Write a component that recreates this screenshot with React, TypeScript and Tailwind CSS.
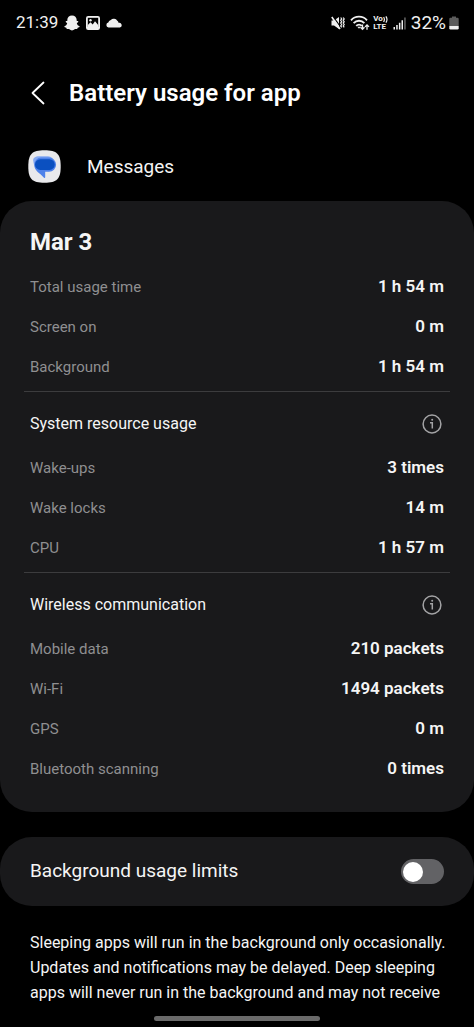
import { useId, useState } from "react";

type Usage = { label: string; value: string };

const dailyUsage: Usage[] = [
  { label: "Total usage time", value: "1 h 54 m" },
  { label: "Screen on", value: "0 m" },
  { label: "Background", value: "1 h 54 m" },
];

const systemUsage: Usage[] = [
  { label: "Wake-ups", value: "3 times" },
  { label: "Wake locks", value: "14 m" },
  { label: "CPU", value: "1 h 57 m" },
];

const wirelessUsage: Usage[] = [
  { label: "Mobile data", value: "210 packets" },
  { label: "Wi-Fi", value: "1494 packets" },
  { label: "GPS", value: "0 m" },
  { label: "Bluetooth scanning", value: "0 times" },
];

function UsageList({ rows }: { rows: Usage[] }) {
  return (
    <dl className="px-[6px]">
      {rows.map((row) => (
        <div key={row.label} className="flex h-10 items-center justify-between">
          <dt className="text-[15px] text-[#8f8f91]">{row.label}</dt>
          <dd className="text-[17px] font-semibold text-[#f5f5f5]">{row.value}</dd>
        </div>
      ))}
    </dl>
  );
}

function InfoIcon() {
  return (
    <svg viewBox="0 0 20 20" className="size-5" fill="none" stroke="#a3a3a5" aria-hidden="true">
      <circle cx="10" cy="10" r="8.9" strokeWidth="1.5" />
      <path d="M8 8.7h2.300v5.800" strokeWidth="1.5" />
      <circle cx="10.2" cy="5.8" r="1" fill="#a3a3a5" stroke="none" />
    </svg>
  );
}

function UsageSection({ title, rows }: { title: string; rows: Usage[] }) {
  return (
    <section className="border-t border-[#3c3c3e] pt-2 pb-1 last:pb-0">
      <div className="flex h-12 items-center justify-between pr-2 pl-[6px]">
        <h3 className="text-[16px] text-[#f5f5f5]">{title}</h3>
        <button type="button" aria-label={`About ${title}`}>
          <InfoIcon />
        </button>
      </div>
      <UsageList rows={rows} />
    </section>
  );
}

function StatusBar() {
  return (
    <div className="flex h-[46px] items-center justify-between pr-[15px] pl-4 text-[#f0f0f0]">
      <div className="flex items-center">
        <span className="text-[17px]">21:39</span>
        <svg viewBox="0 0 16 16" className="ml-[6px] size-4" fill="currentColor" aria-hidden="true">
          <path d="M8 .5c2.8 0 4.7 1.900 4.700 4.400v1.200c.6.100 1.400-.3 1.600.4.200.8-1 1.100-1.500 1.700.4 1.600 1.300 2.500 2.800 3 .3 1-1.200 1.300-1.900 1.500-.3.400-.1 1.100-.7 1.200-.8.100-1.600-.2-2.400.3-.8.700-1.600 1.200-2.600 1.200s-1.800-.5-2.600-1.200c-.8-.5-1.600-.2-2.400-.3-.6-.1-.4-.8-.7-1.200-.7-.2-2.200-.5-1.900-1.500 1.500-.5 2.400-1.400 2.800-3-.5-.6-1.700-.9-1.500-1.700.2-.7 1-.3 1.600-.4V4.900C3.300 2.400 5.200.5 8 .5Z" />
        </svg>
        <svg viewBox="0 0 14 14" className="ml-[6px] size-[14px]" aria-hidden="true">
          <rect width="14" height="14" rx="2.2" fill="currentColor" />
          <rect x="1.8" y="1.8" width="10.4" height="9" fill="#000" />
          <path d="M1.800 11V9l2.700-2.700 2.200 2.200 2.300-3.200 3.200 3.700v2Z" fill="currentColor" />
          <circle cx="4.5" cy="4.200" r="1.2" fill="currentColor" />
        </svg>
        <svg viewBox="0 0 16 10" className="ml-[6px] h-[10px] w-4" fill="currentColor" aria-hidden="true">
          <path d="M2.500 9.500A2.500 2.500 0 0 1 2.300 4.600 3.300 3.300 0 0 1 4.800 2 4.200 4.200 0 0 1 11.300 2.800a3 3 0 0 1 1.200 2 2.400 2.400 0 0 1 1.400 4.700Z" />
        </svg>
      </div>
      <div className="flex items-center">
        <svg viewBox="0 0 14 14" className="size-[14px]" fill="currentColor" stroke="currentColor" aria-hidden="true">
          <path d="M.5 4.500h2.500L8 1v12L3 9.500H.5Z" stroke="none" />
          <path d="M2 .4 10 11.500" stroke="#000" strokeWidth="1.2" />
          <path d="M.8 1 9 13" strokeWidth="1.6" />
          <path d="m9.700 1.500 1 1.400-1 1.400 1 1.400-1 1.400 1 1.400-1 1.400 1 1.400M12.200 1.500l1 1.400-1 1.400 1 1.400-1 1.400 1 1.400-1 1.400 1 1.400" fill="none" strokeWidth="1.2" />
        </svg>
        <svg viewBox="0 0 20 16" className="ml-[5px] h-4 w-5" fill="none" stroke="currentColor" aria-hidden="true">
          <path d="M1 5.300C5.200.5 12.800.5 17 5.300M3.600 8.200c3-3.300 7.800-3.300 10.800 0M6.200 10.800c1.700-1.700 4-1.700 5.600 0" strokeWidth="1.8" />
          <path d="m7.300 11.700 1.700 2.100 1.700-2.100Z" fill="currentColor" stroke="none" />
          <path d="M12.500 9.500v4.700m-2-1.900 2 2 2-2M17 14.800V10m-2 1.900 2-2 2 2" strokeWidth="1.3" />
        </svg>
        <div className="ml-[3px] flex flex-col text-[8px] leading-[8px] font-bold">
          <span className="flex items-center">
            Vo
            <svg viewBox="0 0 5 7" className="h-[7px] w-[5px]" fill="none" stroke="currentColor" strokeWidth="1.2" aria-hidden="true">
              <path d="M.6 1q1.600 2.500 0 5M2.900.3q2.200 3.200 0 6.400" />
            </svg>
          </span>
          <span>LTE</span>
        </div>
        <svg viewBox="0 0 13 13" className="ml-[5px] size-[13px]" fill="currentColor" aria-hidden="true">
          <path d="M.5 10h1.500v2.500H.5ZM3.200 8h1.500v4.500H3.200ZM5.900 5.700h1.500v6.800H5.900ZM8.500 3.300H10v9.200H8.500Z" />
          <path d="M11.200.5h1.500v12h-1.500Z" fill="#666" />
        </svg>
        <span className="ml-[5px] text-[19px]">32%</span>
        <svg viewBox="0 0 10 14" className="ml-[3px] h-[14px] w-[10px]" aria-hidden="true">
          <path d="M3 .5h4v1.300h1.500q1.200 0 1.200 1.200v7H.3V3q0-1.200 1.200-1.200H3Z" fill="#5c5c5c" />
          <path d="M.3 10h9.400v2.300q0 1.200-1.200 1.200h-7q-1.200 0-1.200-1.200Z" fill="currentColor" />
        </svg>
      </div>
    </div>
  );
}

function MessagesIcon() {
  return (
    <svg viewBox="0 0 33 33" className="size-[33px]" aria-hidden="true">
      <path d="M16.500.3C29 .3 32.700 4 32.700 16.500S29 32.700 16.500 32.700.3 29 .3 16.500 4 .3 16.500.3Z" fill="#e9e9ec" />
      <path d="M11 6.300h9a6 6 0 0 1 6 6v1a6 6 0 0 1-6 6h-8a6.500 6.500 0 0 1-6-4.500l-.8-4C4.800 8 7.500 6.300 11 6.300Z" fill="#85a9f2" />
      <path d="M13 7.600h8a7.100 7.100 0 0 1 0 14.200h-3.800v5.500c0 .7-.7.900-1.200.4l-3.500-3.400C9 21.500 6.300 19 6.300 14.700A7 7 0 0 1 13 7.600Z" fill="#4f82ea" />
      <path d="M12.300 9.300h9.200a5.200 5.200 0 0 1 0 10.600h-9.200a5.200 5.200 0 0 1 0-10.600Z" fill="#0b50c0" />
    </svg>
  );
}

export default function App() {
  const [limited, setLimited] = useState(false);
  const switchId = useId();

  return (
    <div className="min-h-screen bg-black font-['Roboto',sans-serif] text-[#f5f5f5]">
      <StatusBar />
      <header className="flex h-[94px] items-center pl-[30px]">
        <button type="button" aria-label="Back" className="flex size-4 items-center justify-center">
          <svg viewBox="0 0 14 24" className="h-6 w-[14px] shrink-0" fill="none" stroke="#fff" strokeWidth="1.8" strokeLinecap="round" strokeLinejoin="round" aria-hidden="true">
            <path d="M12.500 1.500 1.500 12l11 10.500" />
          </svg>
        </button>
        <h1 className="ml-[23px] text-[24px] font-semibold text-white">Battery usage for app</h1>
      </header>
      <main>
        <div className="flex h-[61px] items-start gap-[26px] pt-[10px] pl-7">
          <MessagesIcon />
          <p className="text-[19px] leading-[33px]">Messages</p>
        </div>
        <article className="rounded-[32px] bg-[#19191b] px-6 pt-6 pb-[23px]">
          <h2 className="pl-[6px] text-[24px] leading-[34px] font-bold">Mar 3</h2>
          <div className="pt-2 pb-1">
            <UsageList rows={dailyUsage} />
          </div>
          <UsageSection title="System resource usage" rows={systemUsage} />
          <UsageSection title="Wireless communication" rows={wirelessUsage} />
        </article>
        <div className="mt-[25px] flex h-[69px] items-center justify-between rounded-[32px] bg-[#19191b] px-[30px]">
          <label htmlFor={switchId} className="text-[19px]">
            Background usage limits
          </label>
          <input
            id={switchId}
            type="checkbox"
            role="switch"
            checked={limited}
            onChange={(event) => setLimited(event.target.checked)}
            className="flex h-[25px] w-[43px] appearance-none items-center rounded-full bg-[#626265] px-[2px] before:size-5 before:rounded-full before:bg-white checked:justify-end checked:bg-[#3e82f7]"
          />
        </div>
        <p className="pt-6 pr-5 pl-[30px] text-[16px] leading-[25px]">
          Sleeping apps will run in the background only occasionally. Updates and notifications may be delayed. Deep sleeping apps will never run in the background and may not receive
        </p>
      </main>
      <div className="flex justify-center pt-[11px] pb-[6px]">
        <div className="h-[5px] w-[166px] rounded-full bg-[#6a6a6a]" />
      </div>
    </div>
  );
}
